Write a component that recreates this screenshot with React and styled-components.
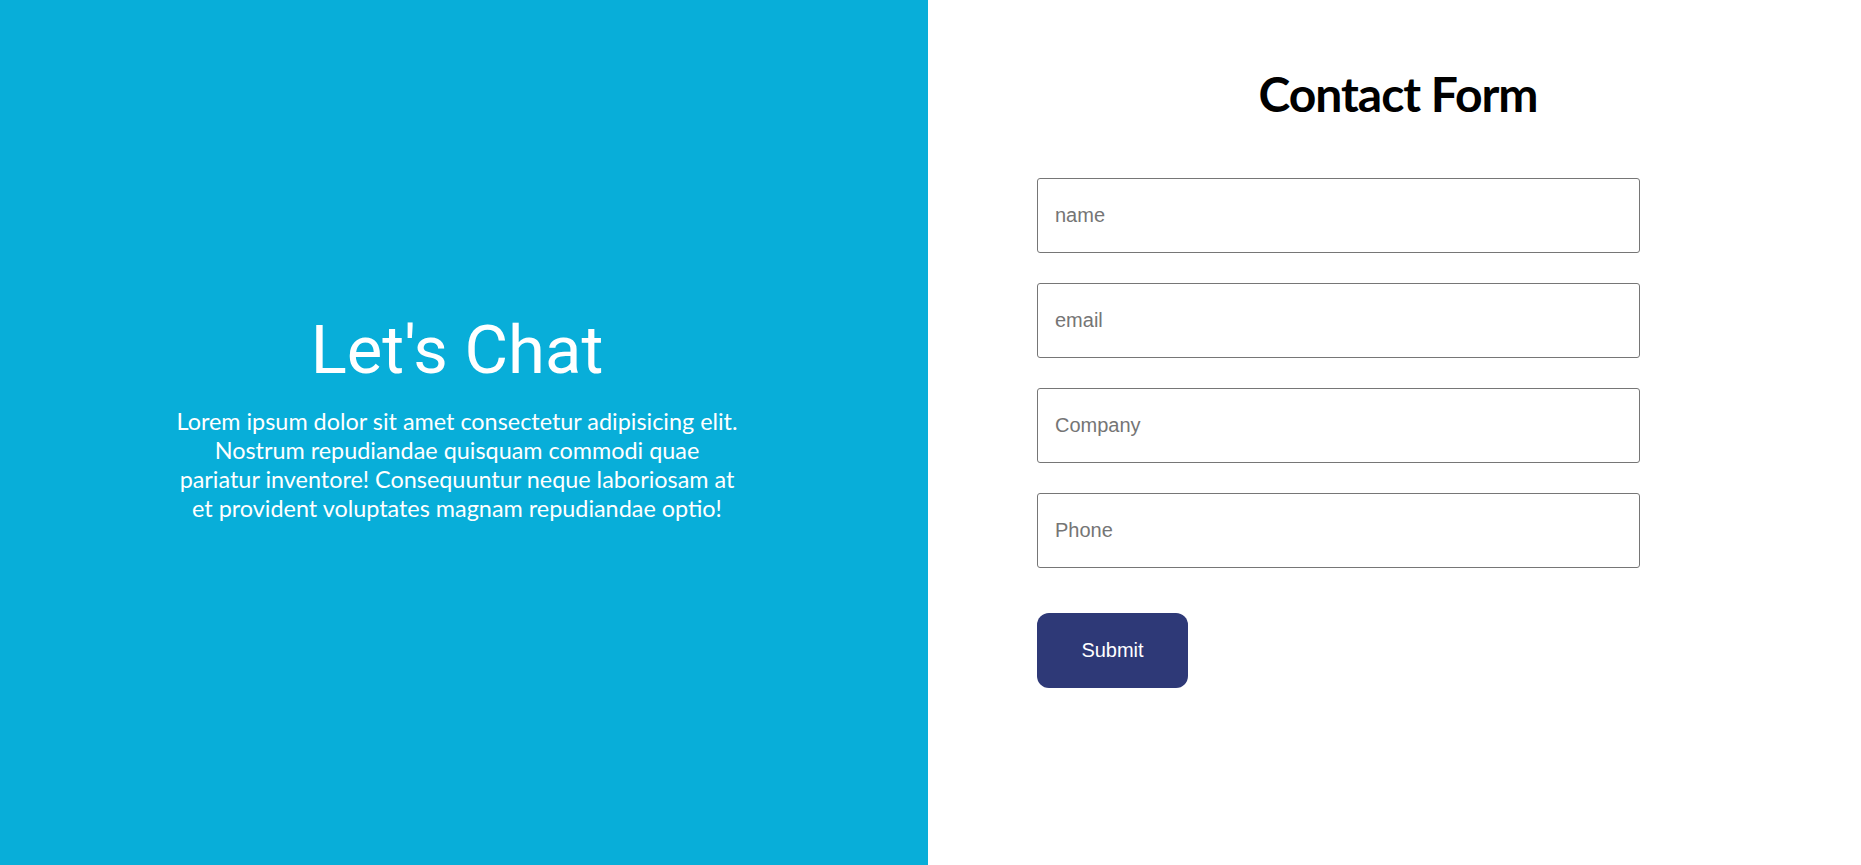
import React from "react";
import styled, { createGlobalStyle } from "styled-components";

const GlobalStyle = createGlobalStyle`
  * { box-sizing: border-box; }
  html, body { margin: 0; padding: 0; }
  body { font-family: "Lato", "Liberation Sans", sans-serif; }
`;

const Page = styled.div`
  display: grid;
  grid-template-columns: 928px 1fr;
  height: 100vh;
  min-height: 865px;
`;

const ChatPanel = styled.section`
  background: #08aed9;
  color: #ffffff;
  display: flex;
  flex-direction: column;
  align-items: center;
  justify-content: center;
  padding: 0 14px 31px 0;
`;

const ChatTitle = styled.h1`
  margin: 0 0 4px;
  font-family: "Roboto", sans-serif;
  font-weight: 400;
  font-size: 67px;
  line-height: normal;
`;

const ChatText = styled.p`
  margin: 14px 0 0;
  width: 566px;
  text-align: center;
  font-family: "Lato", sans-serif;
  font-size: 23.4px;
  line-height: 28.8px;
`;

const FormPanel = styled.section`
  background: #ffffff;
  display: flex;
  flex-direction: column;
  padding-top: 65px;
`;

const FormTitle = styled.h2`
  margin: 0 0 55px;
  padding-left: 7px;
  text-align: center;
  font-family: "Lato", sans-serif;
  font-weight: 700;
  font-size: 48px;
  letter-spacing: -1px;
  line-height: 1.2;
  color: #000000;
`;

const Form = styled.form`
  display: flex;
  flex-direction: column;
  gap: 30px;
  width: 603px;
  margin-left: 109px;
`;

const Field = styled.input`
  height: 75px;
  width: 100%;
  padding: 0 16px 0 17px;
  border: 1px solid #767676;
  border-radius: 3px;
  font-family: "Liberation Sans", Arial, sans-serif;
  font-size: 20px;
  color: #222;
  outline: none;
  &::placeholder { color: #757575; }
`;

const SubmitButton = styled.button`
  margin-top: 15px;
  align-self: flex-start;
  width: 151px;
  height: 75px;
  border: none;
  border-radius: 12px;
  background: #2e3977;
  color: #ffffff;
  font-family: "Liberation Sans", Arial, sans-serif;
  font-size: 20px;
  cursor: pointer;
`;

const fields = ["name", "email", "Company", "Phone"];

export default function App() {
  return (
    <>
      <GlobalStyle />
      <Page>
        <ChatPanel>
          <ChatTitle>Let's Chat</ChatTitle>
          <ChatText>
            Lorem ipsum dolor sit amet consectetur adipisicing elit. Nostrum
            repudiandae quisquam commodi quae pariatur inventore! Consequuntur
            neque laboriosam at et provident voluptates magnam repudiandae optio!
          </ChatText>
        </ChatPanel>
        <FormPanel>
          <FormTitle>Contact Form</FormTitle>
          <Form onSubmit={(e) => e.preventDefault()}>
            {fields.map((f) => (
              <Field key={f} type="text" placeholder={f} />
            ))}
            <SubmitButton type="submit">Submit</SubmitButton>
          </Form>
        </FormPanel>
      </Page>
    </>
  );
}
